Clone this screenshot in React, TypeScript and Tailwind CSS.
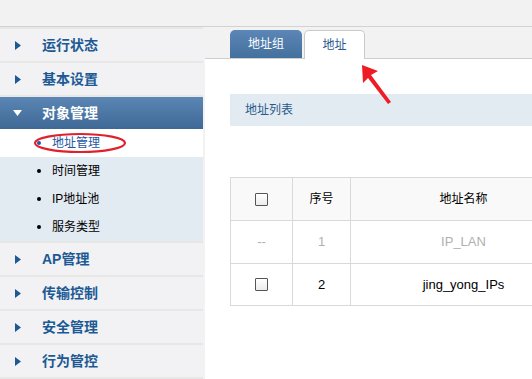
import { Fragment } from "react";

const font = { fontFamily: '"Liberation Sans", "Noto Sans CJK SC", sans-serif' };

function RightTri() {
  return (
    <svg width="6" height="9" viewBox="0 0 6 9" className="shrink-0">
      <path d="M0 0 L6 4.5 L0 9 Z" fill="#1d5a94" />
    </svg>
  );
}

function DownTri() {
  return (
    <svg width="9" height="6" viewBox="0 0 9 6" className="shrink-0">
      <path d="M0 0 L9 0 L4.5 6 Z" fill="#ffffff" />
    </svg>
  );
}

function Checkbox() {
  return (
    <span className="inline-block w-[13px] h-[13px] border border-[#555] bg-gradient-to-b from-white to-[#ececec] rounded-[1px]" />
  );
}

function MenuItem({ label }: { label: string }) {
  return (
    <div className="h-[32px] bg-[#f2f2f4] flex items-center pl-[15px]">
      <RightTri />
      <span className="ml-[21px] text-[14px] font-bold text-[#1d5a94]">{label}</span>
    </div>
  );
}

const subItems = ["时间管理", "IP地址池", "服务类型"];

export default function App() {
  return (
    <div className="w-[532px] h-[379px] bg-[#f2f2f2] overflow-hidden relative flex flex-col" style={font}>
      <div className="h-[27px] shrink-0 border-b border-[#d2d2d2]" />
      <div className="flex flex-1 min-h-0">
        <div className="w-[203px] shrink-0 bg-[#e7e7e5] pt-[2px] flex flex-col gap-[2px]">
          <MenuItem label="运行状态" />
          <MenuItem label="基本设置" />
          <div className="flex flex-col">
            <div className="h-[32px] bg-gradient-to-b from-[#5b86b5] to-[#3e6995] flex items-center pl-[13px]">
              <DownTri />
              <span className="ml-[20px] text-[14px] font-bold text-white">对象管理</span>
            </div>
            <div className="h-[28px] bg-white flex items-center pl-[37px]">
              <span className="w-[4px] h-[4px] rounded-full bg-[#2456a0]" />
              <span className="ml-[11px] text-[12px] text-[#2456a0]">地址管理</span>
            </div>
            {subItems.map((s) => (
              <Fragment key={s}>
                <div className="h-[28px] bg-[#e3ebf2] flex items-center pl-[37px]">
                  <span className="w-[4px] h-[4px] rounded-full bg-black" />
                  <span className="ml-[11px] text-[12px] text-black">{s}</span>
                </div>
              </Fragment>
            ))}
          </div>
          <MenuItem label="AP管理" />
          <MenuItem label="传输控制" />
          <MenuItem label="安全管理" />
          <MenuItem label="行为管控" />
        </div>
        <div className="ml-[2px] flex-1 min-w-0 flex flex-col overflow-hidden">
          <div className="h-[32px] shrink-0 border-b border-[#cfcfcf] flex items-end pl-[25px] gap-[2px]">
            <div className="w-[72px] h-[28px] rounded-t-[5px] bg-gradient-to-b from-[#5b86b5] to-[#44709e] flex items-center justify-center text-[12px] text-white">
              地址组
            </div>
            <div className="w-[61px] h-[29px] -mb-[1px] rounded-t-[5px] border border-b-0 border-[#cacaca] bg-white flex items-center justify-center text-[12px] text-[#2a5890]">
              地址
            </div>
          </div>
          <div className="flex-1 bg-white pl-[25px]">
            <div className="mt-[35px] h-[32px] w-[400px] bg-[#e3ebf2] flex items-center pl-[15px] text-[12px] text-[#2a5a8a]">
              地址列表
            </div>
            <table className="mt-[51px] table-fixed w-[346px] min-w-[346px] border-collapse text-[12px] text-black">
              <colgroup>
                <col className="w-[62px]" />
                <col className="w-[58px]" />
                <col className="w-[226px]" />
              </colgroup>
              <thead>
                <tr className="h-[43px] bg-[#f9f9f9]">
                  <th className="border border-[#d9d9d9] font-normal">
                    <div className="flex justify-center"><Checkbox /></div>
                  </th>
                  <th className="border border-[#d9d9d9] font-normal">序号</th>
                  <th className="border border-[#d9d9d9] font-normal">地址名称</th>
                </tr>
              </thead>
              <tbody className="text-[13px]">
                <tr className="h-[43px] text-[#b0b0b0] text-center">
                  <td className="border border-[#d9d9d9]">--</td>
                  <td className="border border-[#d9d9d9]">1</td>
                  <td className="border border-[#d9d9d9]">IP_LAN</td>
                </tr>
                <tr className="h-[42px] text-center">
                  <td className="border border-[#d9d9d9]">
                    <div className="flex justify-center"><Checkbox /></div>
                  </td>
                  <td className="border border-[#d9d9d9]">2</td>
                  <td className="border border-[#d9d9d9]">jing_yong_IPs</td>
                </tr>
              </tbody>
            </table>
          </div>
        </div>
      </div>
      <svg className="absolute left-[33px] top-[132px]" width="94" height="22" viewBox="0 0 94 22">
        <ellipse cx="47" cy="11" rx="45" ry="9" fill="none" stroke="#e0202a" strokeWidth="2.2" />
      </svg>
      <svg className="absolute left-[358px] top-[62px]" width="36" height="44" viewBox="0 0 36 44">
        <path d="M4 3 L5 21 L10 16 L30 42 L33 40 L13 13 L20 9 Z" fill="#ee1c24" />
      </svg>
    </div>
  );
}
